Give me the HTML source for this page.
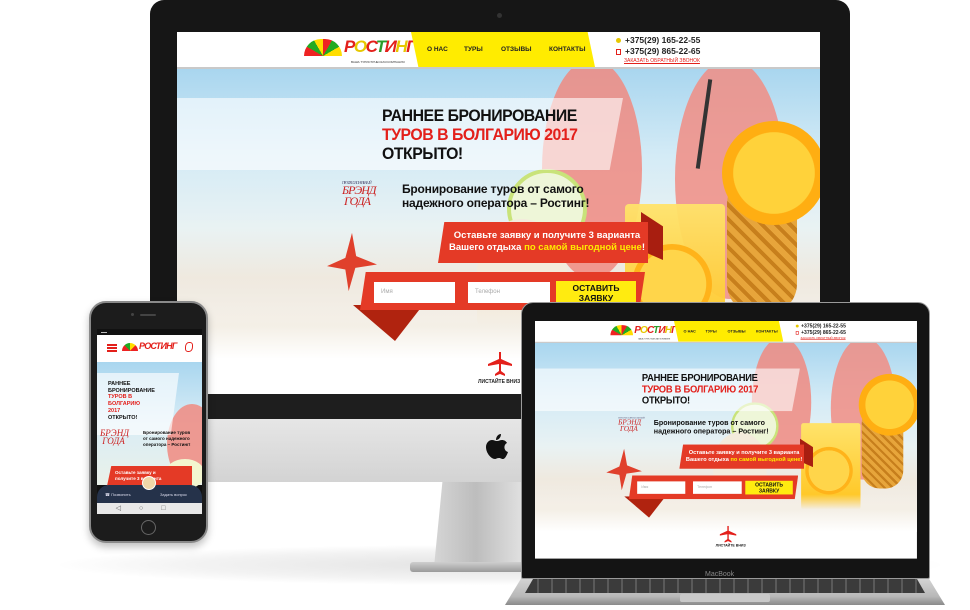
<!DOCTYPE html>
<html><head><meta charset="utf-8">
<style>
*{margin:0;padding:0;box-sizing:border-box}
body{width:970px;height:610px;background:#fff;position:relative;overflow:hidden;font-family:"Liberation Sans","DejaVu Sans",sans-serif}
.a{position:absolute}
.site{position:absolute;left:0;top:0;width:643px;overflow:hidden;background:#fff}
.hdr{position:absolute;left:0;top:0;width:643px;height:37px;background:#fff;border-bottom:2px solid #c9c9c9;z-index:5}
.nav{position:absolute;left:234px;top:0;width:184px;height:35px;background:#ffec00;clip-path:polygon(0 0,96% 0,100% 100%,4% 100%)}
.nav span{position:absolute;top:14px;font-size:6.5px;font-weight:bold;color:#222}
.hero{position:absolute;left:0;top:37px;width:643px;background:linear-gradient(180deg,#a9d6ef 0%,#d4ebf6 30%,#e9f2f3 55%,#efe9df 72%,#f3efe8 86%,#fff 100%)}
.t{font-weight:bold;font-size:17px;line-height:19px;color:#111;letter-spacing:-.5px;transform:scaleX(.93);transform-origin:0 0}
.logo{font:bold italic 17px 'Liberation Sans',sans-serif;color:#e3201b;letter-spacing:-1.5px}
</style></head><body>

<div class="a" style="left:60px;top:545px;width:880px;height:40px;border-radius:50%;background:radial-gradient(ellipse at center,#e2e2e2 0%,#f3f3f3 50%,#fff 72%)"></div>
<div class="a" style="left:434px;top:482px;width:140px;height:85px;background:linear-gradient(90deg,#d5d5d5,#bdbdbd 30%,#e8e8e8 70%,#cfcfcf);clip-path:polygon(6% 0,100% 0,100% 100%,0 100%)"></div>
<div class="a" style="left:410px;top:562px;width:180px;height:10px;background:linear-gradient(#cfcfcf,#9a9a9a);border-radius:3px"></div>

<div class="a" style="left:150px;top:0;width:700px;height:420px;background:#161616;border-radius:14px 14px 0 0"></div>
<div class="a" style="left:497px;top:13px;width:5px;height:5px;border-radius:50%;background:#333"></div>
<div class="a" style="left:150px;top:394px;width:700px;height:25px;background:#1e1e1e"></div>
<div class="a" style="left:150px;top:419px;width:700px;height:63px;background:linear-gradient(#e6e6e6,#d3d3d3);border-radius:0 0 12px 12px"></div>
<svg class="a" style="left:486px;top:434px" width="22" height="27" viewBox="0 0 22 27"><path d="M15 0c0 3-2 6-5 6 0-3 2-6 5-6zM11 7c2 0 3-1 5-1 2 0 4 1 5 3-4 2-3 8 1 9-1 3-3 7-5 7-2 0-2-1-4-1s-3 1-4 1C5 25 0 19 0 13c0-4 3-7 6-7 2 0 3 1 5 1z" fill="#111"/></svg>

<div class="site" style="left:177px;top:32px;height:362px">
  <div class="hero" style="height:290px">
    <div class="a" style="left:365px;top:-10px;width:100px;height:220px;border-radius:50%;background:#f08a80;opacity:.85"></div>
    <div class="a" style="left:498px;top:-10px;width:110px;height:240px;border-radius:50%;background:#f18d84;opacity:.85"></div>
    <div class="a" style="left:330px;top:100px;width:80px;height:80px;border-radius:50%;background:#eef6d8;border:4px solid #c9e37a"></div>
    <div class="a" style="left:300px;top:150px;width:90px;height:110px;border-radius:50% 50% 10px 10px;background:#f3ebdc"></div>
    <div class="a" style="left:448px;top:135px;width:100px;height:150px;background:linear-gradient(#ffe36b,#ffc21a);border-radius:4px 4px 10px 10px;opacity:.95"></div>
    <div class="a" style="left:550px;top:105px;width:70px;height:140px;border-radius:30px;background:repeating-linear-gradient(45deg,#e7a53b 0 6px,#c77f1c 6px 10px)"></div>
    <div class="a" style="left:545px;top:52px;width:104px;height:104px;border-radius:50%;background:radial-gradient(circle,#ffd23a 0 55%,#ffae12 56% 90%,#f7e28c 91%)"></div>
    <div class="a" style="left:455px;top:175px;width:80px;height:80px;border-radius:50%;background:radial-gradient(circle,#ffd54a 0 60%,#ffb31a 61% 92%,#fff2a0 93%)"></div>
    <div class="a" style="left:525px;top:10px;width:4px;height:90px;background:#333;transform:rotate(8deg)"></div>
    <div class="a" style="left:0;top:235px;width:643px;height:55px;background:linear-gradient(#efe7da00,#f4efe6 40%,#fff)"></div>
  </div>
  <div class="a" style="left:0;top:66px;width:446px;height:72px;background:rgba(255,255,255,.6);clip-path:polygon(0 0,100% 0,97% 100%,0 100%)"></div>
  <div class="a t" style="left:205px;top:74px">РАННЕЕ БРОНИРОВАНИЕ<br><span style="color:#e3201b">ТУРОВ В БОЛГАРИЮ 2017</span><br>ОТКРЫТО!</div>
  <div class="a" style="left:165px;top:148px;width:45px;height:32px;font:italic 12px/11px 'Liberation Serif',serif;color:#c22;letter-spacing:-1px"><span style="font-size:4px;color:#557;display:block;line-height:5px">ПРОФЕССИОНАЛЬНЫЙ</span>БРЭНД<br>&nbsp;ГОДА</div>
  <div class="a" style="left:225px;top:150px;font-size:12px;font-weight:bold;line-height:14px;color:#111;letter-spacing:-.2px">Бронирование туров от самого<br>надежного оператора – Ростинг!</div>
  <div class="a" style="left:464px;top:180px;width:22px;height:48px;background:#a81e10;clip-path:polygon(0 0,100% 30%,100% 100%,0 80%)"></div>
  <div class="a" style="left:261px;top:190px;width:210px;height:41px;background:#e43a26;clip-path:polygon(3% 0,100% 0,100% 100%,0 100%)"></div>
  <div class="a" style="left:270px;top:198px;width:200px;text-align:center;font-size:9.5px;font-weight:bold;line-height:12px;color:#fff">Оставьте заявку и получите 3 варианта<br>Вашего отдыха <span style="color:#ffea00">по самой выгодной цене</span>!</div>
  <svg class="a" style="left:150px;top:200px" width="50" height="60" viewBox="0 0 60 70"><path d="M30 0L35 28 60 38 34 42 26 70 22 44 0 40 22 30z" fill="#e0402c"/></svg>
  <div class="a" style="left:176px;top:273px;width:70px;height:36px;background:#b0230f;clip-path:polygon(0 0,100% 0,60% 100%)"></div>
  <div class="a" style="left:183px;top:240px;width:285px;height:38px;background:#e43a26;clip-path:polygon(2% 0,100% 0,98% 100%,0 100%)"></div>
  <div class="a" style="left:197px;top:250px;width:81px;height:21px;background:#fff;font-size:6px;color:#aaa;padding:7px 7px">Имя</div>
  <div class="a" style="left:291px;top:250px;width:82px;height:21px;background:#fff;font-size:6px;color:#aaa;padding:7px 7px">Телефон</div>
  <div class="a" style="left:379px;top:249px;width:80px;height:23px;background:#ffeb10;font-size:8.5px;font-weight:bold;line-height:10px;text-align:center;padding-top:2px;color:#111">ОСТАВИТЬ<br>ЗАЯВКУ</div>
  <svg class="a" style="left:311px;top:320px" width="24" height="24" viewBox="0 0 24 24"><path d="M11 0h2v7l11 5v2L13 12v7l4 3v2l-5-2-5 2v-2l4-3v-7L0 14v-2l11-5z" fill="#e3201b"/></svg>
  <div class="a" style="left:301px;top:347px;font-size:5px;font-weight:bold;color:#222">ЛИСТАЙТЕ ВНИЗ</div>
  <div class="hdr">
    <div class="a" style="left:127px;top:7px;width:38px;height:17px;border-radius:40px 40px 0 0;background:conic-gradient(from 270deg at 50% 100%,#e22 0 30deg,#2a2 30deg 60deg,#fd0 60deg 90deg,#e22 90deg 120deg,#2a2 120deg 150deg,#fd0 150deg 180deg,#fff 180deg)"></div>
    <div class="a logo" style="left:167px;top:5px">Р<span style="color:#e6c800">О</span>С<span style="color:#2a9d2a">Т</span>И<span style="color:#e6c800">Н</span>Г</div>
    <div class="a" style="left:174px;top:28px;font-size:3px;color:#333">ВАША ТУРИСТИЧЕСКАЯ КОМПАНИЯ</div>
    <div class="nav"><span style="left:16px">О НАС</span><span style="left:53px">ТУРЫ</span><span style="left:90px">ОТЗЫВЫ</span><span style="left:138px">КОНТАКТЫ</span></div>
    <div class="a" style="left:439px;top:6px;width:5px;height:5px;background:#e6c800;border-radius:50%"></div>
    <div class="a" style="left:439px;top:17px;width:5px;height:6px;border:1.5px solid #e3201b"></div>
    <div class="a" style="left:448px;top:3px;font-size:8.5px;font-weight:bold;line-height:11px;color:#222">+375(29) 165-22-55<br>+375(29) 865-22-65</div>
    <div class="a" style="left:447px;top:26px;font-size:5px;color:#e3201b;text-decoration:underline">ЗАКАЗАТЬ ОБРАТНЫЙ ЗВОНОК</div>
  </div>
</div>

<div class="a" style="left:89px;top:301px;width:119px;height:242px;background:#1c1c1c;border-radius:17px;border:2px solid #8a8a8a;box-shadow:0 4px 8px rgba(0,0,0,.25)"></div>
<div class="a" style="left:140px;top:314px;width:16px;height:2px;background:#444;border-radius:2px"></div>
<div class="a" style="left:131px;top:313px;width:3px;height:3px;background:#444;border-radius:50%"></div>
<div class="a" style="left:141px;top:520px;width:15px;height:15px;border-radius:50%;border:1.5px solid #666"></div>
<div class="a" style="left:97px;top:329px;width:105px;height:185px;background:#111;overflow:hidden">
  <div class="a" style="left:0;top:6px;width:105px;height:27px;background:#fff"></div>
  <div class="a" style="left:10px;top:15px;width:10px;height:2px;background:#e3201b;box-shadow:0 3px #e3201b,0 6px #e3201b"></div>
  <div class="a" style="left:25px;top:14px;width:16px;height:8px;border-radius:16px 16px 0 0;background:conic-gradient(from 270deg at 50% 100%,#e22 0 45deg,#2a2 45deg 90deg,#fd0 90deg 135deg,#e22 135deg 180deg,#fff 180deg)"></div>
  <div class="a" style="left:42px;top:12px;font:bold italic 9px sans-serif;color:#e3201b;letter-spacing:-.8px">РОСТИНГ</div>
  <div class="a" style="left:88px;top:13px;width:8px;height:10px;border:1.5px solid #e3201b;border-radius:50% 3px"></div>
  <div class="a" style="left:0;top:33px;width:105px;height:123px;background:linear-gradient(#a9d6ef,#d9edf6 50%,#eaf1e9)"></div>
  <div class="a" style="left:70px;top:75px;width:50px;height:80px;border-radius:50%;background:#f08a80;opacity:.85"></div>
  <div class="a" style="left:68px;top:130px;width:40px;height:30px;border-radius:50%;background:#f3f6cf"></div>
  <div class="a" style="left:0;top:44px;width:82px;height:62px;background:rgba(255,255,255,.65);clip-path:polygon(0 0,100% 0,90% 100%,0 100%)"></div>
  <div class="a" style="left:11px;top:52px;font-size:5.5px;font-weight:bold;line-height:6.7px;color:#111">РАННЕЕ<br>БРОНИРОВАНИЕ<br><span style="color:#e3201b">ТУРОВ В<br>БОЛГАРИЮ<br>2017</span><br>ОТКРЫТО!</div>
  <div class="a" style="left:3px;top:100px;font:italic 9px/8px serif;color:#c22">БРЭНД<br>&nbsp;ГОДА</div>
  <div class="a" style="left:46px;top:101px;font-size:4.5px;font-weight:bold;line-height:6px;color:#111">Бронирование туров<br>от самого надежного<br>оператора – Ростинг!</div>
  <div class="a" style="left:10px;top:137px;width:85px;height:20px;background:#e43a26;clip-path:polygon(5% 0,100% 0,100% 100%,0 100%)"></div>
  <div class="a" style="left:18px;top:141px;font-size:4.5px;font-weight:bold;line-height:6px;color:#fff">Оставьте заявку и<br>получите 3 варианта</div>
  <div class="a" style="left:0;top:156px;width:105px;height:18px;background:#25324a;border-radius:12px 12px 0 0"></div>
  <div class="a" style="left:45px;top:147px;width:14px;height:14px;border-radius:50%;background:#f0d7a8;border:1.5px solid #fff"></div>
  <div class="a" style="left:8px;top:163px;font-size:4px;color:#dde">☎ Позвонить</div>
  <div class="a" style="left:63px;top:163px;font-size:4px;color:#dde">Задать вопрос</div>
  <div class="a" style="left:0;top:174px;width:105px;height:11px;background:#e8e8e8;font-size:7px;color:#666;line-height:11px;text-align:center;letter-spacing:18px">◁○□</div>
  <div class="a" style="left:4px;top:1px;font-size:3px;color:#ccc">▬▬</div>
</div>

<div class="a" style="left:505px;top:576px;width:440px;height:29px;background:linear-gradient(#d8d8d8,#b8b8b8 70%,#8a8a8a);clip-path:polygon(4% 0,96% 0,100% 100%,0 100%)"></div>
<div class="a" style="left:525px;top:579px;width:400px;height:14px;background:repeating-linear-gradient(90deg,#3b3b3b 0 12px,#5a5a5a 12px 14px);clip-path:polygon(2% 0,98% 0,100% 100%,0 100%)"></div>
<div class="a" style="left:680px;top:594px;width:90px;height:8px;background:#c9c9c9;border-radius:2px"></div>
<div class="a" style="left:521px;top:302px;width:409px;height:277px;background:#141414;border-radius:12px 12px 2px 2px;border:1.5px solid #9a9a9a"></div>
<div class="a" style="left:705px;top:571px;font-size:7px;color:#888">MacBook</div>
<div class="a" style="left:535px;top:321px;width:382px;height:238px;overflow:hidden">
 <div class="site" style="height:400px;transform:scale(.594);transform-origin:0 0">
  <div class="hero" style="height:318px">
    <div class="a" style="left:365px;top:-10px;width:100px;height:220px;border-radius:50%;background:#f08a80;opacity:.85"></div>
    <div class="a" style="left:498px;top:-10px;width:110px;height:240px;border-radius:50%;background:#f18d84;opacity:.85"></div>
    <div class="a" style="left:330px;top:100px;width:80px;height:80px;border-radius:50%;background:#eef6d8;border:4px solid #c9e37a"></div>
    <div class="a" style="left:300px;top:150px;width:90px;height:110px;border-radius:50% 50% 10px 10px;background:#f3ebdc"></div>
    <div class="a" style="left:448px;top:135px;width:100px;height:150px;background:linear-gradient(#ffe36b,#ffc21a);border-radius:4px 4px 10px 10px"></div>
    <div class="a" style="left:550px;top:105px;width:70px;height:140px;border-radius:30px;background:repeating-linear-gradient(45deg,#e7a53b 0 6px,#c77f1c 6px 10px)"></div>
    <div class="a" style="left:545px;top:52px;width:104px;height:104px;border-radius:50%;background:radial-gradient(circle,#ffd23a 0 55%,#ffae12 56% 90%,#f7e28c 91%)"></div>
    <div class="a" style="left:455px;top:175px;width:80px;height:80px;border-radius:50%;background:radial-gradient(circle,#ffd54a 0 60%,#ffb31a 61% 92%,#fff2a0 93%)"></div>
    <div class="a" style="left:0;top:255px;width:643px;height:63px;background:linear-gradient(#efe7da00,#f4efe6 40%,#fff)"></div>
  </div>
  <div class="a" style="left:0;top:80px;width:446px;height:72px;background:rgba(255,255,255,.6);clip-path:polygon(0 0,100% 0,97% 100%,0 100%)"></div>
  <div class="a t" style="left:180px;top:86px">РАННЕЕ БРОНИРОВАНИЕ<br><span style="color:#e3201b">ТУРОВ В БОЛГАРИЮ 2017</span><br>ОТКРЫТО!</div>
  <div class="a" style="left:140px;top:160px;width:45px;height:32px;font:italic 12px/11px 'Liberation Serif',serif;color:#c22"><span style="font-size:4px;color:#557;display:block;line-height:5px">ПРОФЕССИОНАЛЬНЫЙ</span>БРЭНД<br>&nbsp;ГОДА</div>
  <div class="a" style="left:200px;top:164px;font-size:12px;font-weight:bold;line-height:14px;color:#111">Бронирование туров от самого<br>надежного оператора – Ростинг!</div>
  <div class="a" style="left:446px;top:198px;width:22px;height:48px;background:#a81e10;clip-path:polygon(0 0,100% 30%,100% 100%,0 80%)"></div>
  <div class="a" style="left:243px;top:208px;width:210px;height:41px;background:#e43a26;clip-path:polygon(3% 0,100% 0,100% 100%,0 100%)"></div>
  <div class="a" style="left:252px;top:216px;width:200px;text-align:center;font-size:9.5px;font-weight:bold;line-height:12px;color:#fff">Оставьте заявку и получите 3 варианта<br>Вашего отдыха <span style="color:#ffea00">по самой выгодной цене</span>!</div>
  <svg class="a" style="left:120px;top:215px" width="60" height="70" viewBox="0 0 60 70"><path d="M30 0L35 28 60 38 34 42 26 70 22 44 0 40 22 30z" fill="#e0402c"/></svg>
  <div class="a" style="left:150px;top:295px;width:70px;height:36px;background:#b0230f;clip-path:polygon(0 0,100% 0,60% 100%)"></div>
  <div class="a" style="left:158px;top:260px;width:285px;height:40px;background:#e43a26;clip-path:polygon(2% 0,100% 0,98% 100%,0 100%)"></div>
  <div class="a" style="left:172px;top:270px;width:81px;height:21px;background:#fff;font-size:6px;color:#aaa;padding:7px">Имя</div>
  <div class="a" style="left:266px;top:270px;width:82px;height:21px;background:#fff;font-size:6px;color:#aaa;padding:7px">Телефон</div>
  <div class="a" style="left:354px;top:269px;width:80px;height:23px;background:#ffeb10;font-size:8.5px;font-weight:bold;line-height:10px;text-align:center;padding-top:2px;color:#111">ОСТАВИТЬ<br>ЗАЯВКУ</div>
  <svg class="a" style="left:311px;top:345px" width="28" height="28" viewBox="0 0 24 24"><path d="M11 0h2v7l11 5v2L13 12v7l4 3v2l-5-2-5 2v-2l4-3v-7L0 14v-2l11-5z" fill="#e3201b"/></svg>
  <div class="a" style="left:304px;top:376px;font-size:6px;font-weight:bold;color:#222">ЛИСТАЙТЕ ВНИЗ</div>
  <div class="hdr">
    <div class="a" style="left:127px;top:7px;width:38px;height:17px;border-radius:40px 40px 0 0;background:conic-gradient(from 270deg at 50% 100%,#e22 0 30deg,#2a2 30deg 60deg,#fd0 60deg 90deg,#e22 90deg 120deg,#2a2 120deg 150deg,#fd0 150deg 180deg,#fff 180deg)"></div>
    <div class="a logo" style="left:167px;top:5px">Р<span style="color:#e6c800">О</span>С<span style="color:#2a9d2a">Т</span>И<span style="color:#e6c800">Н</span>Г</div>
    <div class="a" style="left:174px;top:28px;font-size:3px;color:#333">ВАША ТУРИСТИЧЕСКАЯ КОМПАНИЯ</div>
    <div class="nav"><span style="left:16px">О НАС</span><span style="left:53px">ТУРЫ</span><span style="left:90px">ОТЗЫВЫ</span><span style="left:138px">КОНТАКТЫ</span></div>
    <div class="a" style="left:439px;top:6px;width:5px;height:5px;background:#e6c800;border-radius:50%"></div>
    <div class="a" style="left:439px;top:17px;width:5px;height:6px;border:1.5px solid #e3201b"></div>
    <div class="a" style="left:448px;top:3px;font-size:8.5px;font-weight:bold;line-height:11px;color:#222">+375(29) 165-22-55<br>+375(29) 865-22-65</div>
    <div class="a" style="left:447px;top:26px;font-size:5px;color:#e3201b;text-decoration:underline">ЗАКАЗАТЬ ОБРАТНЫЙ ЗВОНОК</div>
  </div>
 </div>
</div>
</body></html>
